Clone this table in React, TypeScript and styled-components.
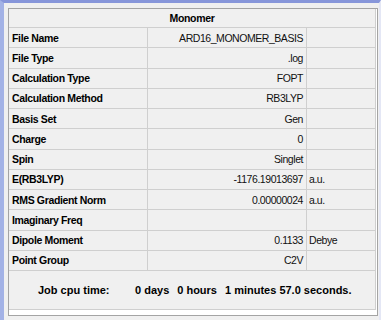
import styled, { createGlobalStyle } from 'styled-components'

const GlobalStyle = createGlobalStyle`
  html, body {
    margin: 0;
    padding: 0;
    background: #f0f0f0;
  }
  * {
    box-sizing: border-box;
  }
`

interface iRow {
  label: string;
  value: string;
  unit?: string;
}

const rows: iRow[] = [
  { label: 'File Name', value: 'ARD16_MONOMER_BASIS' },
  { label: 'File Type', value: '.log' },
  { label: 'Calculation Type', value: 'FOPT' },
  { label: 'Calculation Method', value: 'RB3LYP' },
  { label: 'Basis Set', value: 'Gen' },
  { label: 'Charge', value: '0' },
  { label: 'Spin', value: 'Singlet' },
  { label: 'E(RB3LYP)', value: '-1176.19013697', unit: 'a.u.' },
  { label: 'RMS Gradient Norm', value: '0.00000024', unit: 'a.u.' },
  { label: 'Imaginary Freq', value: '' },
  { label: 'Dipole Moment', value: '0.1133', unit: 'Debye' },
  { label: 'Point Group', value: 'C2V' },
]

const App = () => {
  return (
    <>
      <GlobalStyle />
      <Window>
        <Frame>
          <Header>Monomer</Header>
          {rows.map((r) => (
            <Row key={r.label}>
              <Label>{r.label}</Label>
              <Value>{r.value}</Value>
              <Unit>{r.unit}</Unit>
            </Row>
          ))}
          <JobRow>
            <JobLabel>Job cpu time:</JobLabel>
            <TimePart>0 days</TimePart>
            <TimePart>0 hours</TimePart>
            <TimePart>1 minutes 57.0 seconds.</TimePart>
          </JobRow>
        </Frame>
      </Window>
    </>
  )
}

export default App

const Window = styled.div`
  width: 381px;
  height: 320px;
  background: #f0f0f0;
  border-top: 3px solid #8796da;
  border-left: 4px solid #a3b2e6;
  border-right: 2px solid #e4e7f5;
  padding-top: 5px;
  padding-left: 4px;
  overflow: hidden;
`
const Frame = styled.div`
  width: 370px;
  height: 308px;
  border: 1px solid #a4a4a4;
  background: #ffffff;
  padding-right: 1px;
  font-family: "Liberation Sans", Arial, sans-serif;
  color: #000;
`
const Header = styled.div`
  height: 19px;
  display: flex;
  justify-content: center;
  align-items: center;
  background: #f0f0f0;
  border-right: 1px solid #cfcfcf;
  border-bottom: 1px solid #cfcfcf;
  font-size: 10.5px;
  font-weight: 700;
  letter-spacing: -0.35px;
`
const Row = styled.div`
  height: 20.25px;
  display: grid;
  grid-template-columns: 139px 159px 69px;
  background: #f0f0f0;
  border-bottom: 1px solid #cfcfcf;
`
const Cell = styled.div`
  display: flex;
  align-items: center;
  border-right: 1px solid #cfcfcf;
  white-space: nowrap;
  overflow: hidden;
`
const Label = styled(Cell)`
  padding-left: 3px;
  font-size: 10.5px;
  font-weight: 700;
  letter-spacing: -0.35px;
`
const Value = styled(Cell)`
  justify-content: flex-end;
  padding-right: 3px;
  font-size: 10.5px;
  letter-spacing: -0.45px;
  color: #111;
`
const Unit = styled(Cell)`
  padding-left: 2px;
  font-size: 10.5px;
  letter-spacing: -0.45px;
  color: #111;
`
const JobRow = styled.div`
  height: 39px;
  display: flex;
  align-items: center;
  padding-left: 29px;
  background: #f0f0f0;
  border-right: 1px solid #cfcfcf;
  border-bottom: 1px solid #cfcfcf;
  font-size: 11px;
  font-weight: 700;
  white-space: nowrap;
`
const JobLabel = styled.span`
  width: 97px;
`
const TimePart = styled.span`
  margin-right: 8px;
`
